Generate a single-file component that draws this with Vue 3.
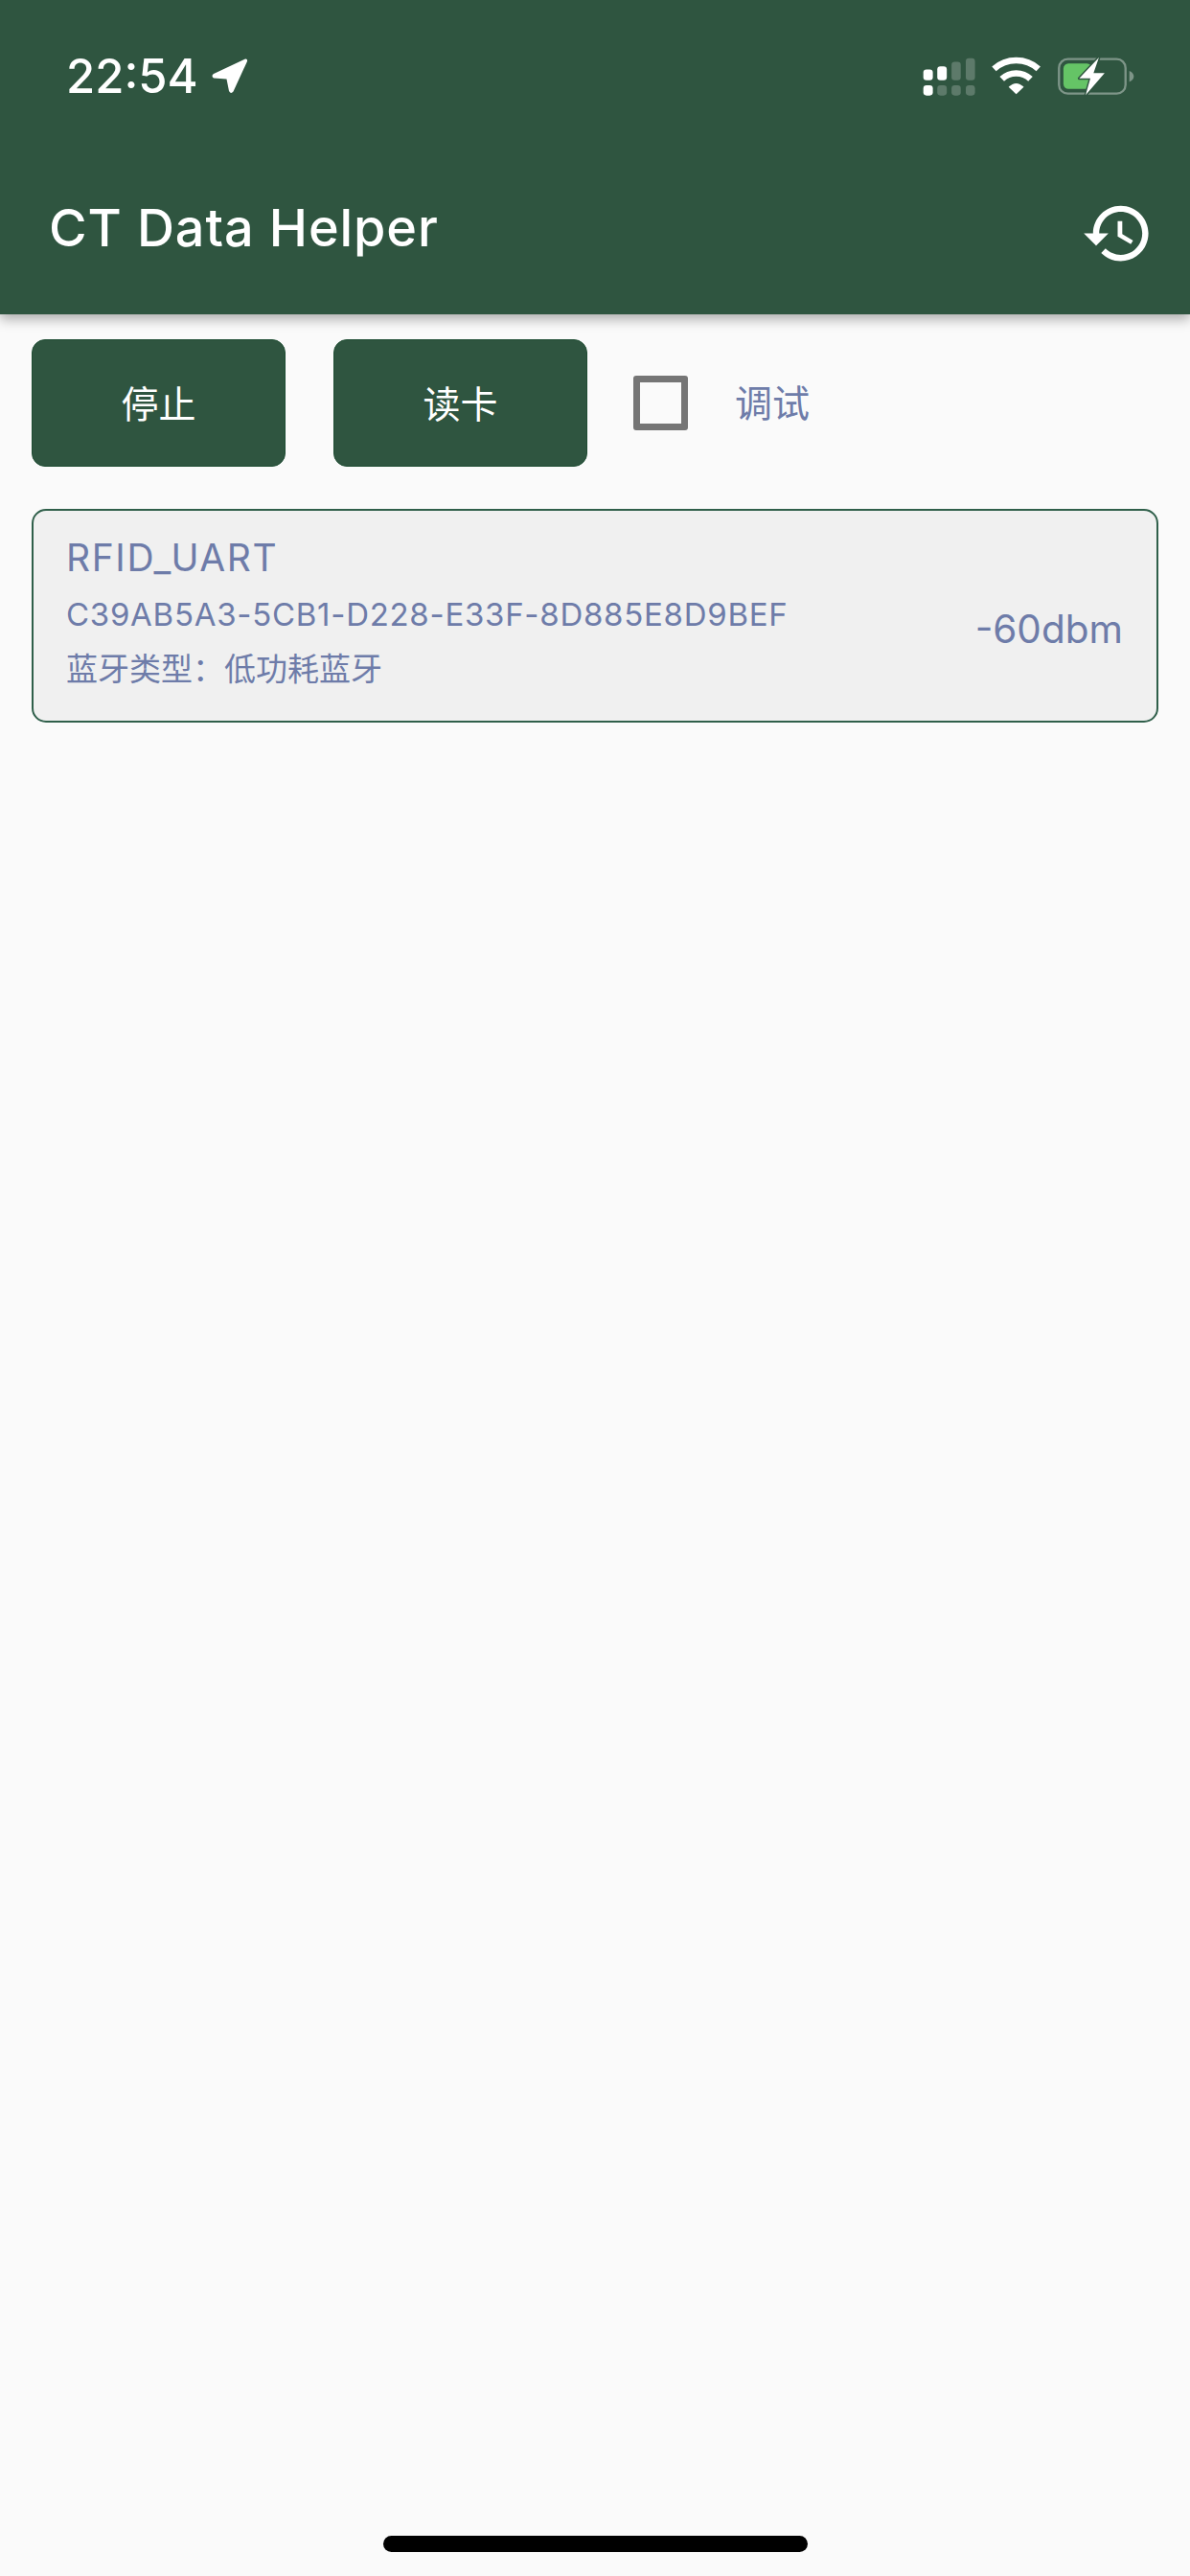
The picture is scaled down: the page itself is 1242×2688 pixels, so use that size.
<script setup>
const device = {
  name: 'RFID_UART',
  id: 'C39AB5A3-5CB1-D228-E33F-8D885E8D9BEF',
  type: '蓝牙类型：低功耗蓝牙',
  rssi: '-60dbm'
}
</script>

<template>
  <div class="page">
    <header class="header">
      <div class="status">
        <div class="clock">
          <span class="time">22:54</span>
          <svg class="arrow" viewBox="0 0 38 38" aria-hidden="true">
            <path d="M35 1.5 L2 17 Q-1 19 2 21.5 L15.5 22.5 L18 35 Q20 38.5 22.5 35.5 L37 4 Q37.5 1 35 1.5 Z" fill="#fff" />
          </svg>
        </div>
        <svg class="indicators" viewBox="120 80 680 130" aria-hidden="true">
          <g fill="#fff">
            <rect x="128" y="124" width="30" height="34" rx="10" />
            <rect x="172" y="114" width="30" height="44" rx="10" />
            <rect x="128" y="174" width="30" height="32" rx="10" />
          </g>
          <g fill="#fff" opacity=".22">
            <rect x="217" y="100" width="29" height="58" rx="10" />
            <rect x="262" y="88" width="29" height="70" rx="10" />
            <rect x="172" y="174" width="30" height="32" rx="10" />
            <rect x="217" y="174" width="29" height="32" rx="10" />
            <rect x="262" y="174" width="29" height="32" rx="10" />
          </g>
          <g fill="none" stroke="#fff" stroke-width="20">
            <path d="M351 122 A105 105 0 0 1 491 122" />
            <path d="M376 154 A65 65 0 0 1 466 154" />
          </g>
          <path d="M421 202 L397 179 Q421 156 445 179 Z" fill="#fff" />
          <rect x="556" y="91" width="210" height="109" rx="28" fill="none" stroke="#fff" stroke-opacity=".38" stroke-width="7" />
          <path d="M778 128 Q792 134 792 146 Q792 157 778 163 Z" fill="#fff" fill-opacity=".38" />
          <rect x="570" y="105" width="90" height="80" rx="16" fill="#65c466" />
          <path d="M682 86 L620 152 L655 152 L640 205 L700 135 L665 135 Z" fill="#fff" stroke="#2f5540" stroke-width="9" stroke-linejoin="round" paint-order="stroke" />
        </svg>
      </div>
      <div class="toolbar">
        <h1 class="title">CT Data Helper</h1>
        <svg class="history" viewBox="0 0 24 24" aria-hidden="true">
          <path fill="#fff" d="M13 3c-4.97 0-9 4.03-9 9H1l3.89 3.89.07.14L9 12H6c0-3.87 3.13-7 7-7s7 3.13 7 7-3.13 7-7 7c-1.93 0-3.68-.79-4.94-2.06l-1.42 1.42C8.27 19.99 10.51 21 13 21c4.97 0 9-4.03 9-9s-4.03-9-9-9zm-1 5v5l4.28 2.54.72-1.21-3.5-2.08V8H12z" />
        </svg>
      </div>
    </header>

    <main class="content">
      <div class="actions">
        <button class="btn" type="button">停止</button>
        <button class="btn" type="button">读卡</button>
        <span class="check" aria-hidden="true"></span>
        <span class="check-label">调试</span>
      </div>

      <section class="card">
        <div class="info">
          <div class="name">{{ device.name }}</div>
          <div class="uuid">{{ device.id }}</div>
          <div class="type">{{ device.type }}</div>
        </div>
        <div class="rssi">{{ device.rssi }}</div>
      </section>
    </main>

    <div class="home"><span class="home-bar"></span></div>
  </div>
</template>

<style scoped>
.page {
  width: 1242px;
  height: 2688px;
  display: flex;
  flex-direction: column;
  background: #fafafa;
  font-family: Inter, "Noto Sans CJK SC", sans-serif;
  color: #6e7ca9;
  overflow: hidden;
}
.header {
  height: 328px;
  flex: none;
  background: #2f5540;
  box-shadow: 0 5px 12px rgba(0, 0, 0, 0.32);
  color: #fff;
  position: relative;
}
.status {
  height: 158px;
  padding: 0 55px 0 69px;
  display: flex;
  align-items: center;
  justify-content: space-between;
}
.clock {
  display: flex;
  align-items: center;
  gap: 14px;
}
.time {
  padding-top: 2px;
  font-size: 49px;
  font-weight: 500;
  line-height: 56px;
}
.arrow {
  width: 38px;
  height: 38px;
}
.indicators {
  width: 227px;
  height: 43px;
}
.toolbar {
  height: 170px;
  padding: 0 37px 12px 51px;
  display: flex;
  align-items: center;
  justify-content: space-between;
}
.title {
  margin: 0 0 10px;
  font-size: 54px;
  font-weight: 500;
  line-height: 64px;
  letter-spacing: 0.9px;
}
.history {
  width: 77px;
  height: 77px;
}
.content {
  flex: 1;
  padding: 26px 33px 0;
}
.actions {
  display: flex;
  align-items: center;
}
.btn {
  width: 265px;
  height: 133px;
  margin-right: 50px;
  padding: 0 0 3px;
  border: 1px solid #1f4d33;
  border-radius: 14px;
  background: #2f5540;
  color: #fff;
  font-family: inherit;
  font-size: 39px;
}
.btn + .btn {
  margin-right: 0;
}
.check {
  width: 57px;
  height: 57px;
  margin-left: 48px;
  box-sizing: border-box;
  border: 7px solid #757575;
  border-radius: 3px;
}
.check-label {
  margin-left: 49px;
  font-size: 39px;
  line-height: 50px;
}
.card {
  height: 223px;
  margin-top: 44px;
  box-sizing: border-box;
  padding: 0 35px 0 34px;
  display: flex;
  align-items: center;
  justify-content: space-between;
  background: #f0f0f0;
  border: 2px solid #2f5f4a;
  border-radius: 15px;
}
.info {
  display: flex;
  flex-direction: column;
}
.name {
  margin-top: -8px;
  font-size: 39px;
  line-height: 50px;
  letter-spacing: 1.6px;
}
.uuid {
  margin-top: 13px;
  font-size: 33px;
  line-height: 42px;
  letter-spacing: 0.72px;
}
.type {
  margin-top: 13px;
  font-size: 33px;
  line-height: 46px;
}
.rssi {
  margin-top: 28px;
  font-size: 40.5px;
  line-height: 50px;
}
.home {
  flex: none;
  height: 42px;
  display: flex;
  justify-content: center;
}
.home-bar {
  width: 443px;
  height: 17px;
  border-radius: 9px;
  background: #000;
}
</style>
